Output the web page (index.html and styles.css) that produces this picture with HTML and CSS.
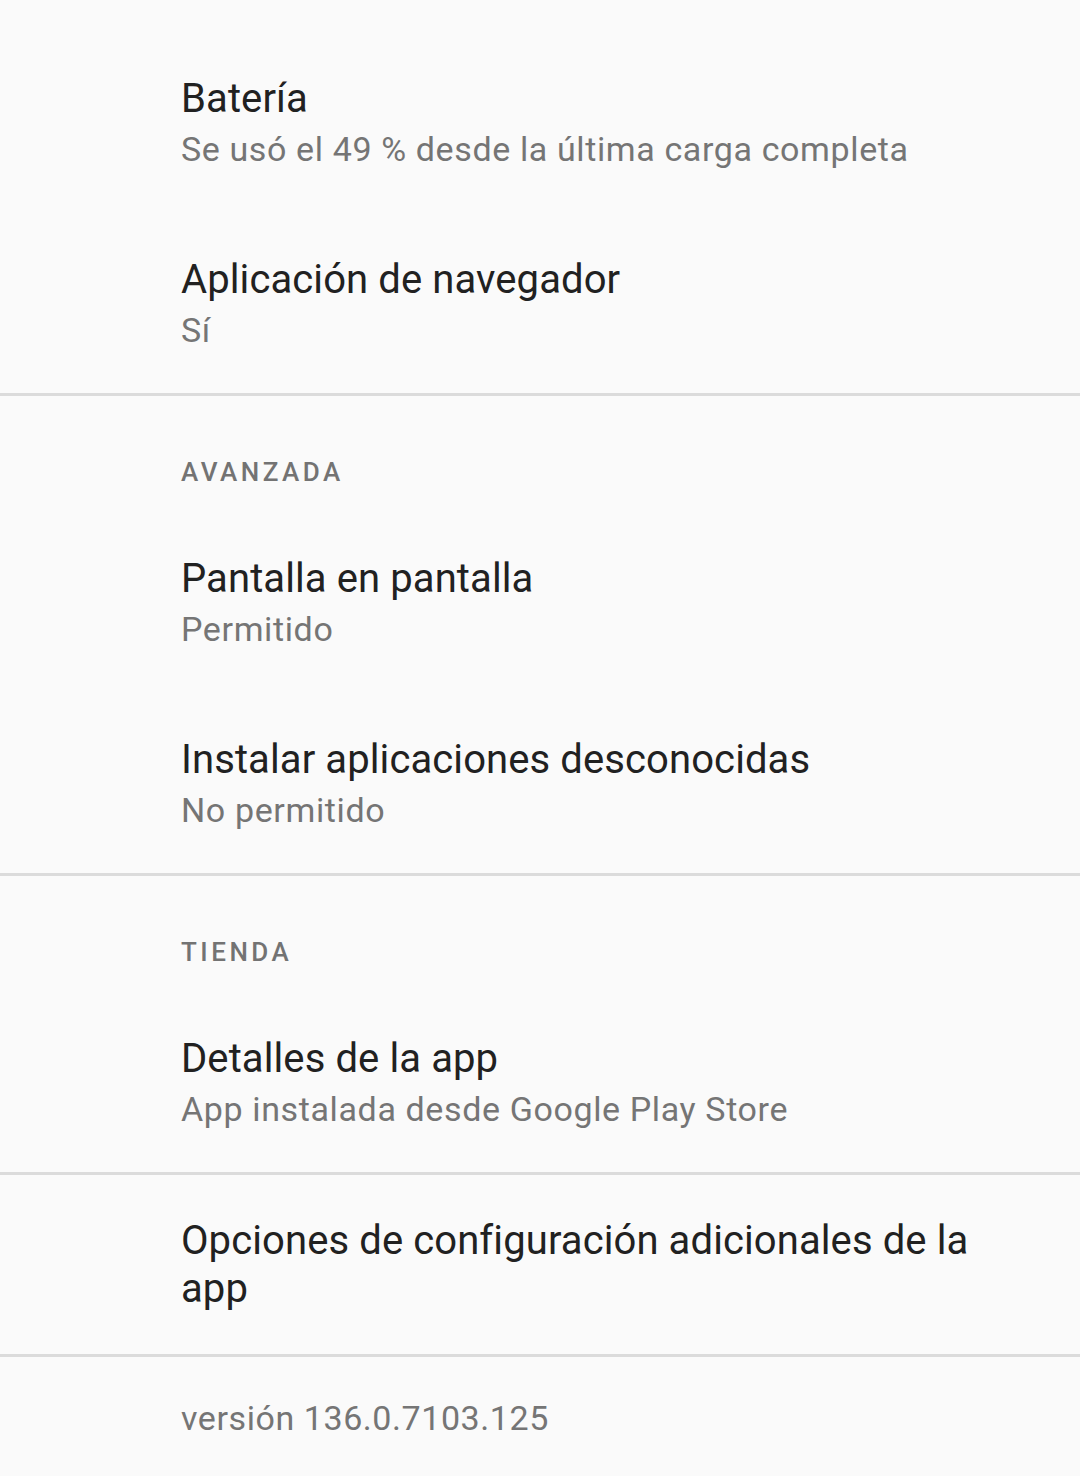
FILE: index.html
```html
<!DOCTYPE html>
<html lang="es">
<head>
<meta charset="utf-8">
<link rel="stylesheet" href="styles.css">
</head>
<body>
<div class="page">
  <div class="item">
    <div class="title">Batería</div>
    <div class="summary">Se usó el 49 % desde la última carga completa</div>
  </div>
  <div class="item">
    <div class="title">Aplicación de navegador</div>
    <div class="summary">Sí</div>
  </div>
  <div class="divider"></div>
  <div class="header">AVANZADA</div>
  <div class="item">
    <div class="title">Pantalla en pantalla</div>
    <div class="summary">Permitido</div>
  </div>
  <div class="item">
    <div class="title">Instalar aplicaciones desconocidas</div>
    <div class="summary">No permitido</div>
  </div>
  <div class="divider"></div>
  <div class="header">TIENDA</div>
  <div class="item">
    <div class="title">Detalles de la app</div>
    <div class="summary">App instalada desde Google Play Store</div>
  </div>
  <div class="divider"></div>
  <div class="item item-single">
    <div class="title">Opciones de configuración adicionales de la app</div>
  </div>
  <div class="divider"></div>
  <div class="footer">versión 136.0.7103.125</div>
</div>
</body>
</html>
```

FILE: styles.css
```css
html, body {
  margin: 0;
  padding: 0;
  background: #fafafa;
}
body {
  font-family: Roboto, "Noto Sans", sans-serif;
  width: 1080px;
  height: 1476px;
  overflow: hidden;
}
.page {
  padding-top: 31px;
}
.item {
  padding: 44px 100px 37px 181px;
}
.item-single {
  padding-top: 42px;
  padding-bottom: 41px;
}
.title {
  font-size: 40px;
  line-height: 48px;
  letter-spacing: 0.1px;
  color: #212121;
}
.summary {
  font-size: 34px;
  line-height: 52px;
  letter-spacing: 0.62px;
  color: #757575;
}
.divider {
  height: 3px;
  background: #dbdbdb;
}
.header {
  padding: 56px 0 19px 181px;
  font-size: 26px;
  line-height: 40px;
  font-weight: 500;
  letter-spacing: 3.5px;
  color: #737373;
}
.footer {
  padding: 37px 0 0 181px;
  font-size: 34px;
  line-height: 48px;
  letter-spacing: 0.57px;
  color: #757575;
}
```
